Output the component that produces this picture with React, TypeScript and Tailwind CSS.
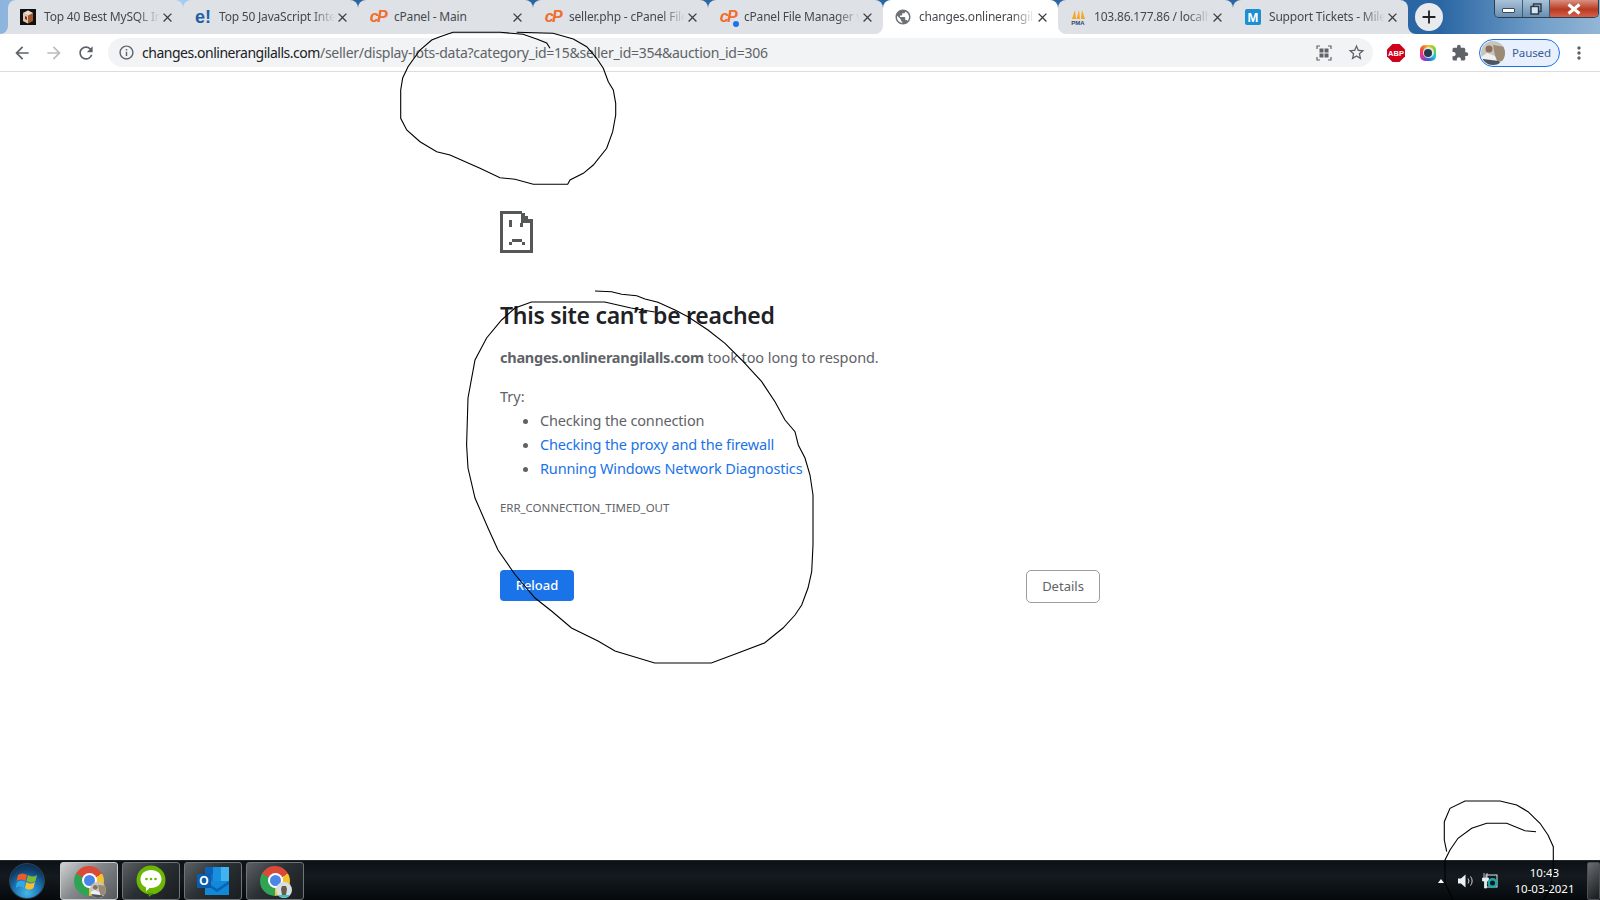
import React from "react";
import { MdArrowBack, MdArrowForward, MdRefresh, MdInfoOutline, MdStarBorder, MdMoreVert, MdClose, MdAdd, MdExtension, MdPublic } from "react-icons/md";

const Cp = () => (
  <span className="flex w-4 h-4 items-center justify-center text-[16px] font-bold italic leading-none tracking-[-1.5px] text-[#f26c2b] font-['Liberation_Sans',sans-serif]">cP</span>
);

const Cube = () => (
  <svg width="16" height="16" viewBox="0 0 16 16">
    <rect width="16" height="16" fill="#111" />
    <path d="M3 4l5-2.5L13 4v8l-5 2.5L3 12z" fill="#a8562c" />
    <path d="M3 4l5 2.5L13 4 8 1.5z" fill="#e6ddd0" />
    <path d="M8 6.5V14.5L3 12V4z" fill="#d9c9b4" />
    <path d="M5 7l2 1v3l-2-1z" fill="#8a2d1a" />
  </svg>
);

const Pma = () => (
  <svg width="16" height="16" viewBox="0 0 16 16">
    <path d="M2 10L5 1l1 9zM6.5 10L9 1l1 9zM11 10l1-9 3 9z" fill="#f5a623" />
    <text x="8" y="15.5" textAnchor="middle" fontSize="6" fontWeight="700" fill="#33456e" fontFamily="Liberation Sans, sans-serif">PMA</text>
  </svg>
);

const MBox = () => (
  <span className="flex h-4 w-4 items-center justify-center rounded-[2px] bg-[#1b8fd0] text-[13px] font-bold leading-none text-white font-['Liberation_Sans',sans-serif]">M</span>
);

const EBang = () => (
  <span className="flex h-4 w-4 items-center justify-center text-[18px] font-bold leading-none text-[#1f5fa5] font-['Liberation_Sans',sans-serif]">e!</span>
);

const tabs = [
  { t: "Top 40 Best MySQL Interview Questions", icon: <Cube /> },
  { t: "Top 50 JavaScript Interview Questions", icon: <EBang /> },
  { t: "cPanel - Main", icon: <Cp />, noFade: true },
  { t: "seller.php - cPanel File Manager", icon: <Cp /> },
  { t: "cPanel File Manager v3 - Files", icon: <Cp />, dot: true },
  { t: "changes.onlinerangilalls.com", icon: <MdPublic size={18} className="-m-px text-[#6e7175]" />, active: true },
  { t: "103.86.177.86 / localhost", icon: <Pma /> },
  { t: "Support Tickets - MilesWeb", icon: <MBox /> },
];

const sep = [0, 1, 2, 3, 6];

const Flare = ({ side, color }: { side: "l" | "r"; color: string }) => (
  <svg width="8" height="8" viewBox="0 0 8 8" className={side === "l" ? "absolute bottom-0 -left-2" : "absolute bottom-0 -right-2"}>
    <path d={side === "l" ? "M8 0v8H0a8 8 0 0 0 8-8z" : "M0 0v8h8a8 8 0 0 1-8-8z"} fill={color} />
  </svg>
);

const Tab = ({ tab, i }: { tab: (typeof tabs)[number]; i: number }) => (
  <div className={`relative flex h-[34px] w-[175px] shrink-0 items-center rounded-t-lg pl-3 pr-2 ${tab.active ? "z-10 bg-white" : "bg-[#dee1e6]"}`}>
    {tab.active && <Flare side="l" color="#ffffff" />}
    {tab.active && <Flare side="r" color="#ffffff" />}
    {i === 0 && <Flare side="l" color="#dee1e6" />}
    {i === 7 && <Flare side="r" color="#dee1e6" />}
    <span className="relative flex h-4 w-4 shrink-0 items-center justify-center">
      {tab.icon}
      {tab.dot && <span className="absolute -bottom-[2px] left-[13px] h-[6px] w-[6px] rounded-full bg-[#1a73e8]" />}
    </span>
    <span className={`ml-2 w-[116px] overflow-hidden whitespace-nowrap text-[12px] tracking-[-0.2px] text-[#45494e] ${tab.noFade ? "" : "[mask-image:linear-gradient(90deg,#000_80%,transparent)]"}`}>{tab.t}</span>
    <MdClose size={15} className="ml-auto shrink-0 text-[#3c4043]" />
    {sep.includes(i) && <span className="absolute -right-px top-[7px] h-5 w-px bg-[#80868b]" />}
  </div>
);

const GridIcon = () => (
  <svg width="16" height="16" viewBox="0 0 16 16" fill="none" stroke="#5f6368" strokeWidth="1.2">
    <path d="M1 4V1h3M12 1h3v3M15 12v3h-3M4 15H1v-3" />
    <g fill="#5f6368" stroke="none">
      <rect x="3.5" y="3.5" width="4" height="4" />
      <rect x="8.5" y="3.5" width="4" height="4" />
      <rect x="3.5" y="8.5" width="4" height="4" />
      <rect x="8.5" y="8.5" width="4" height="4" />
    </g>
  </svg>
);

const Abp = () => (
  <svg width="18" height="18" viewBox="0 0 18 18">
    <path d="M5.5 0h7L18 5.5v7L12.5 18h-7L0 12.5v-7z" fill="#d0021b" />
    <text x="9" y="12" textAnchor="middle" fontSize="7.5" fontWeight="700" fill="#fff" fontFamily="Liberation Sans, sans-serif">ABP</text>
  </svg>
);

const Lens = () => (
  <span className="flex h-4 w-4 items-center justify-center rounded-[5px] bg-[conic-gradient(#f6c026,#7ed321,#19c3d8,#3d5be0,#e02fa8,#f5473a,#f6c026)]">
    <span className="flex h-[11px] w-[11px] items-center justify-center rounded-full bg-[#dfe5ea]">
      <span className="h-[8px] w-[8px] rounded-full bg-[#27394a]" />
    </span>
  </span>
);

const Avatar = ({ size }: { size: number }) => (
  <svg width={size} height={size} viewBox="0 0 24 24">
    <defs>
      <clipPath id={`av${size}`}><circle cx="12" cy="12" r="12" /></clipPath>
    </defs>
    <g clipPath={`url(#av${size})`}>
      <rect width="24" height="24" fill="#c9c5bd" />
      <path d="M12 4l12 2v14l-9 0z" fill="#9b8a74" />
      <circle cx="8" cy="8" r="3.5" fill="#8b6f58" />
      <path d="M0 24V16l6-4 8 3 4 9z" fill="#eef0f2" />
      <path d="M0 24l2-6 16 2 2 4z" fill="#4b5560" />
    </g>
  </svg>
);

const ChromeIcon = ({ badge }: { badge: "a" | "b" }) => (
  <span className="relative flex h-[30px] w-[30px] items-center justify-center rounded-full bg-[conic-gradient(from_300deg,#d94a3a_0_120deg,#f4c430_120deg_240deg,#2fa455_240deg_360deg)]">
    <span className="flex h-[15px] w-[15px] items-center justify-center rounded-full bg-white">
      <span className="h-[11px] w-[11px] rounded-full bg-[#4a86e8]" />
    </span>
    <span className="absolute -bottom-[2px] -right-[2px]">
      {badge === "a" ? <Avatar size={16} /> : (
        <svg width="16" height="16" viewBox="0 0 16 16">
          <circle cx="8" cy="8" r="8" fill="#d7dfe6" />
          <path d="M2 13a8 8 0 0 0 12 0z" fill="#39c6bd" />
          <path d="M6 4l4 0 1 3-1 6H6L5 7z" fill="#6b5a48" />
        </svg>
      )}
    </span>
  </span>
);

const Messenger = () => (
  <svg width="30" height="32" viewBox="0 0 30 32">
    <circle cx="15" cy="15" r="14.5" fill="#6cb606" />
    <path d="M12 28l1 4 5-4z" fill="#4f9a05" />
    <path d="M15 5c6 0 10.5 3.8 10.5 9S21 23 15 23h-1.5L10 26.5V22.3C6.700 21 4.500 18 4.500 14 4.500 8.800 9 5 15 5z" fill="#fff" />
    <circle cx="10.500" cy="14" r="1.300" fill="#6cb606" />
    <circle cx="15" cy="14" r="1.300" fill="#6cb606" />
    <circle cx="19.500" cy="14" r="1.300" fill="#6cb606" />
  </svg>
);

const Outlook = () => (
  <span className="relative block h-[28px] w-[32px]">
    <svg width="32" height="28" viewBox="0 0 32 28" className="absolute left-0 top-0">
      <rect x="8" y="0" width="8" height="7" fill="#0a63b6" />
      <rect x="16" y="0" width="8" height="7" fill="#1a8fe0" />
      <rect x="24" y="0" width="8" height="7" fill="#41b4ef" />
      <rect x="8" y="7" width="8" height="7" fill="#0f72c4" />
      <rect x="16" y="7" width="8" height="7" fill="#1a8fe0" />
      <rect x="24" y="7" width="8" height="7" fill="#41b4ef" />
      <path d="M8 14h24v14H8z" fill="#1289d8" />
      <path d="M8 14l12 8 12-8v3l-12 8-12-8z" fill="#0a63b6" />
    </svg>
    <span className="absolute left-0 top-[7px] flex h-[14px] w-[14px] items-center justify-center bg-[#0b5cad] text-[12px] font-bold leading-none text-white font-['Liberation_Sans',sans-serif]">O</span>
  </span>
);

const Orb = () => (
  <span className="flex h-[36px] w-[36px] items-center justify-center rounded-full border border-[#30434f] bg-[radial-gradient(circle_at_50%_85%,#45b7e8_0%,#1b75b5_40%,#0f3d68_70%,#0c2238_100%)]">
    <svg width="22" height="20" viewBox="0 0 22 20">
      <path d="M2 4c3-2 6-2 9 0l-1.500 6c-3-2-6-2-9 0z" fill="#ef5a28" />
      <path d="M12 4c3 2 6 2 9 0l-1.500 6c-3 2-6 2-9 0z" fill="#7fba32" />
      <path d="M1 11c3-2 5.500-2 8.500 0L8 17c-3-2-5.500-2-8.500 0z" fill="#31a7e6" />
      <path d="M10.500 11c3 2 5.500 2 8.500 0l-1.500 6c-3 2-5.500 2-8.500 0z" fill="#fdbd2c" />
    </svg>
  </span>
);

const Network = () => (
  <svg width="18" height="18" viewBox="0 0 18 18">
    <path d="M3 1v5M6 1v5M1.500 6h6v3h-2v7h-2V9h-2z" fill="#e8eef2" stroke="#e8eef2" strokeWidth="0.800" />
    <rect x="5" y="3" width="11" height="12" fill="none" stroke="#dfe7ea" strokeWidth="1" />
    <circle cx="11.500" cy="11" r="5" fill="#1fa8a8" />
    <circle cx="11.500" cy="11" r="2.500" fill="#0a1a22" />
  </svg>
);

const Speaker = () => (
  <svg width="16" height="16" viewBox="0 0 16 16" fill="none">
    <path d="M0 5.500h3L7.500 1.500v13L3 10.500H0z" fill="#eef2f4" />
    <path d="M10 5.500a4 4 0 0 1 0 5M12.500 3.500a7 7 0 0 1 0 9" stroke="#cfd6da" strokeWidth="1" />
  </svg>
);

const TaskBtn = ({ active, children }: { active?: boolean; children: React.ReactNode }) => (
  <div className={`flex h-[38px] w-[58px] shrink-0 items-center justify-center rounded-[3px] border ${active ? "border-[#c9cccf] bg-[linear-gradient(135deg,#cfd1d2_0%,#85888a_45%,#55595c_100%)]" : "border-[#6f7478] bg-[linear-gradient(135deg,#5c6064_0%,#2b3034_45%,#191d20_100%)]"}`}>
    {children}
  </div>
);

const A = "550,48.3 546.7,43 536.7,39 523,34.3 500,32.3 453,32.3 440,36.7 431.7,40 420,50 408,66.7 402.7,78 400.7,90 400.7,118.3 406.7,130 420,141.7 436.7,151.7 450,155 480,168.3 500,177.7 515,179.3 533.3,184.3 567.7,184.3 570,180 583.3,173.3 593.3,165 606.7,148.3 612.7,131.7 615.7,115 615.7,103.3 613.3,90 608.3,81.7 603.3,68.3 596.7,58.3 586.7,46.7 573.3,39 553,33.3 516.7,32.3";
const B = "595,291 611.5,291.7 621.7,294.3 636.7,295.7 645,299 658,302.3 675,310 688,316.7 708,330 725,343.3 741.7,360 761.7,381.7 775,401.7 785,420 795,431.7 798.3,445 805,458 810,475 813,495 813,545 811.7,571.7 808,588 801.7,605 795,615 783,628 764.5,643 738,653 711.3,663 654.7,663 615,651 598,641 571.5,628 551.5,611 535,598 515,574.5 498,550 488,528 475,498 468,468 466.6,445 468,398 475,360 486.6,338 501.6,320 515,308 531.5,302 604.7,302 631,308 654.7,312";
const C = "1446.7,851.7 1444.3,840 1444.3,821.7 1450,808.3 1465,801 1500,801 1516.7,805 1528,811.7 1540,823.3 1548,835 1553.3,846.7 1553.3,870 1550,890 1543,900";
const D = "1536,831.7 1525,830.7 1506.7,823.3 1486.7,823.3 1471.7,828.3 1458,838.3 1450,850 1445,860 1445,883 1453,900";

const SadIcon = () => (
  <svg width="33" height="42" viewBox="0 0 33 42" fill="#555759" shapeRendering="crispEdges">
    <path d="M0 0h22v2h3v3h3v3h5v34H0zM3 3v36h27V12h-9V3z" fillRule="evenodd" />
    <path d="M22 3h2v2h3v3h3v1h-8z" />
    <rect x="9" y="9" width="3" height="7" />
    <rect x="20" y="12" width="3" height="4" />
    <rect x="12" y="28" width="10" height="3" />
    <rect x="9" y="31" width="3" height="3" />
    <rect x="22" y="31" width="3" height="3" />
  </svg>
);

export default function App() {
  return (
    <div className="relative flex h-[900px] w-[1600px] flex-col overflow-hidden bg-white font-['Noto_Sans',sans-serif]">
      <div className="flex h-[34px] shrink-0 bg-[linear-gradient(90deg,#8db4dd_0%,#a9d0f5_11%,#2a66a3_22%,#2a66a3_90%,#6f9dc8_96%,#94b6d5_100%)] pl-2">
        {tabs.map((tab, i) => <Tab key={i} tab={tab} i={i} />)}
        <div className="ml-[7px] mt-[3px] flex h-7 w-7 items-center justify-center rounded-full bg-[#e8eaed]">
          <MdAdd size={22} className="text-[#202124]" />
        </div>
        <div className="ml-[51px] flex h-[18px] w-[105px] overflow-hidden rounded-b-[5px] border border-t-0 border-[#2c3e50]">
          <div className="flex w-[28px] items-center justify-center bg-[linear-gradient(180deg,#a9c3d9,#6a8eb0)] border-r border-[#3b5a78]">
            <span className="mt-1 h-[5px] w-[13px] rounded-[1px] border border-[#3b4a5a] bg-white" />
          </div>
          <div className="flex w-[27px] items-center justify-center bg-[linear-gradient(180deg,#a9c3d9,#6a8eb0)] border-r border-[#3b5a78]">
            <svg width="12" height="12" viewBox="0 0 12 12" fill="none" stroke="#26384a" strokeWidth="1.400"><rect x="3.500" y="1" width="7.500" height="7.500" /><rect x="1" y="3.500" width="7.500" height="7.500" fill="#dbe5ee" /></svg>
          </div>
          <div className="flex flex-1 items-center justify-center bg-[linear-gradient(180deg,#d99080_0%,#b93a22_55%,#d4604a_100%)]">
            <svg width="16" height="12" viewBox="0 0 16 12" fill="none" stroke="#fff" strokeWidth="3"><path d="M2.500 1.500l11 9M13.500 1.500l-11 9" /></svg>
          </div>
        </div>
      </div>

      <div className="flex h-[38px] shrink-0 items-center border-b border-[#dadce0] bg-white pl-[6px] pr-[11px]">
        <MdArrowBack size={20} className="mx-[6px] text-[#5f6368]" />
        <MdArrowForward size={20} className="mx-[6px] text-[#babcbe]" />
        <MdRefresh size={20} className="mx-[6px] text-[#5f6368]" />
        <div className="ml-[6px] flex h-[29px] flex-1 items-center rounded-full bg-[#f1f3f4] pl-[10px] pr-[7px]">
          <MdInfoOutline size={17} className="text-[#5f6368]" />
          <span className="ml-[7px] mb-[1px] whitespace-nowrap text-[14px] tracking-[-0.27px] text-[#5f6368]"><span className="tracking-[-0.48px] text-[#202124]">changes.onlinerangilalls.com</span>/seller/display-lots-data?category_id=15&amp;seller_id=354&amp;auction_id=306</span>
          <span className="ml-auto flex items-center gap-[15px]">
            <GridIcon />
            <MdStarBorder size={19} className="text-[#5f6368]" />
          </span>
        </div>
        <span className="ml-[14px] flex w-[18px] justify-center"><Abp /></span>
        <span className="ml-[14px] flex w-[18px] justify-center"><Lens /></span>
        <span className="ml-[14px] flex w-[18px] justify-center"><MdExtension size={18} className="text-[#5f6368]" /></span>
        <div className="ml-[10px] flex h-[28px] w-[81px] items-center rounded-full border border-[#1a73e8] bg-[#e8f0fe] pl-[1px]">
          <Avatar size={24} />
          <span className="ml-[7px] text-[11.500px] tracking-[-0.1px] text-[#3c5a94]">Paused</span>
        </div>
        <MdMoreVert size={20} className="ml-[9px] text-[#5f6368]" />
      </div>

      <main className="flex-1 pl-[500px] pt-[139px]">
        <div className="w-[600px]">
          <SadIcon />
          <h1 className="mt-[44px] text-[23px] font-semibold leading-[36px] tracking-[-0.28px] text-[#202124]">This site can’t be reached</h1>
          <p className="mt-[12px] text-[14.500px] leading-[24px] tracking-[-0.08px] text-[#5f6368]"><strong className="font-bold tracking-[-0.25px]">changes.onlinerangilalls.com</strong> took too long to respond.</p>
          <p className="mt-[15px] text-[14.500px] leading-[24px] text-[#5f6368]">Try:</p>
          <ul className="list-disc pl-[40px] text-[14.500px] leading-[24px] tracking-[-0.16px] text-[#5f6368]">
            <li>Checking the connection</li>
            <li><span className="text-[#1a73e8]">Checking the proxy and the firewall</span></li>
            <li><span className="text-[#1a73e8]">Running Windows Network Diagnostics</span></li>
          </ul>
          <p className="mt-[20px] text-[11.500px] uppercase leading-[16px] tracking-[-0.05px] text-[#5f6368]">ERR_CONNECTION_TIMED_OUT</p>
          <div className="mt-[54px] flex items-start justify-between">
            <button className="h-[31px] w-[74px] rounded-[4px] bg-[#1a73e8] text-[13px] font-medium text-white">Reload</button>
            <button className="h-[33px] w-[74px] rounded-[5px] border border-[#9a9ea3] bg-white text-[13px] text-[#5f6368]">Details</button>
          </div>
        </div>
      </main>

      <footer className="flex h-[40px] shrink-0 items-center border-t border-[#22282d] bg-[linear-gradient(180deg,#0b1116_0%,#141a1f_40%,#05090c_100%)]">
        <span className="ml-[9px] mr-[15px] flex"><Orb /></span>
        <div className="flex gap-[4px]">
          <TaskBtn active><ChromeIcon badge="a" /></TaskBtn>
          <TaskBtn><Messenger /></TaskBtn>
          <TaskBtn><Outlook /></TaskBtn>
          <TaskBtn><ChromeIcon badge="b" /></TaskBtn>
        </div>
        <div className="ml-auto flex items-center">
          <span className="h-0 w-0 border-x-[3.500px] border-b-[4px] border-x-transparent border-b-white" />
          <span className="ml-[14px] flex"><Speaker /></span>
          <span className="ml-[7px] flex"><Network /></span>
          <div className="ml-[13px] w-[65px] text-center text-[11.500px] leading-[16px] text-white">
            <div>10:43</div>
            <div>10-03-2021</div>
          </div>
          <div className="ml-[10px] h-[38px] w-[13px] rounded-[2px] border border-[#4a5056] bg-[linear-gradient(135deg,#6a6e72,#15191c)]" />
        </div>
      </footer>

      <svg className="pointer-events-none absolute left-0 top-0 z-20" width="1600" height="900" fill="none" stroke="#000" strokeWidth="1.100">
        <polyline points={A} />
        <polyline points={B} />
        <polyline points={C} />
        <polyline points={D} />
      </svg>
    </div>
  );
}
